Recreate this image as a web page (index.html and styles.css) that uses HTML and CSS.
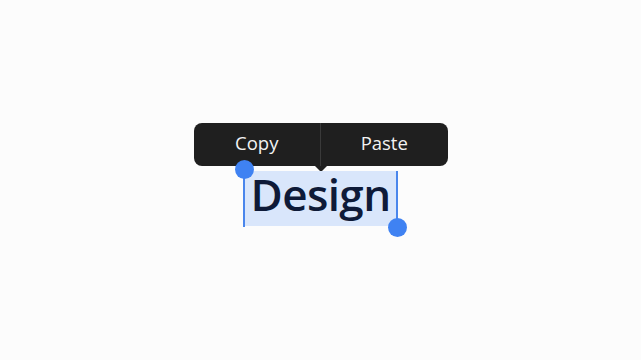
FILE: index.html
```html
<!DOCTYPE html>
<html lang="en">
<head>
      <meta charset="UTF-8">
      <meta name="viewport" content="width=device-width, initial-scale=1.0">
      <title>Text selection</title>
      <link rel="stylesheet" href="styles.css">
</head>
<body>
      <div class="stage">
            <div class="menu">
                  <button class="menu-item">Copy</button>
                  <button class="menu-item">Paste</button>
            </div>
            <div class="selection">
                  <span class="word">Design</span>
                  <span class="caret caret-start"></span>
                  <span class="caret caret-end"></span>
            </div>
      </div>
</body>
</html>
```

FILE: styles.css
```css
*{
      box-sizing: border-box;
}

body{
      margin: 0;
      background: #fcfcfc;
      font-family: "Open Sans", "Noto Sans", sans-serif;
}
.stage{
      height: 360px;
      display: flex;
      flex-direction: column;
      align-items: center;
      padding-top: 123px;
}
.menu{
      width: 254px;
      height: 43px;
      display: flex;
      background: #1f1f1f;
      border-radius: 8px;
      position: relative;
}
.menu::after{
      content: "";
      position: absolute;
      left: 121px;
      bottom: -6px;
      border-left: 6px solid transparent;
      border-right: 6px solid transparent;
      border-top: 6px solid #1f1f1f;
}
.menu-item{
      flex: 1;
      appearance: none;
      border: none;
      background: none;
      color: #f2f2f2;
      font-family: inherit;
      font-size: 18.5px;
      padding: 0 0 4px 0;
      cursor: pointer;
}
.menu-item + .menu-item{
      border-left: 1px solid #3a3a3a;
}
.selection{
      position: relative;
      margin-top: 5px;
      width: 153px;
      height: 55px;
      background: #d9e6fb;
      display: flex;
      align-items: center;
      justify-content: center;
}
.word{
      color: #0e1a38;
      font-size: 44px;
      font-weight: 600;
      letter-spacing: -0.6px;
      line-height: 1;
      padding: 0 0 9px 0;
}
.caret{
      position: absolute;
      width: 2px;
      background: #4a86ec;
}
.caret::before{
      content: "";
      position: absolute;
      width: 19px;
      height: 19px;
      border-radius: 50%;
      background: #3f82f2;
      left: -8.5px;
}
.caret-start{
      left: -1px;
      top: -4px;
      height: 60px;
}
.caret-start::before{
      top: -7px;
}
.caret-end{
      right: -1px;
      top: 0;
      height: 56px;
}
.caret-end::before{
      bottom: -10px;
}
```
